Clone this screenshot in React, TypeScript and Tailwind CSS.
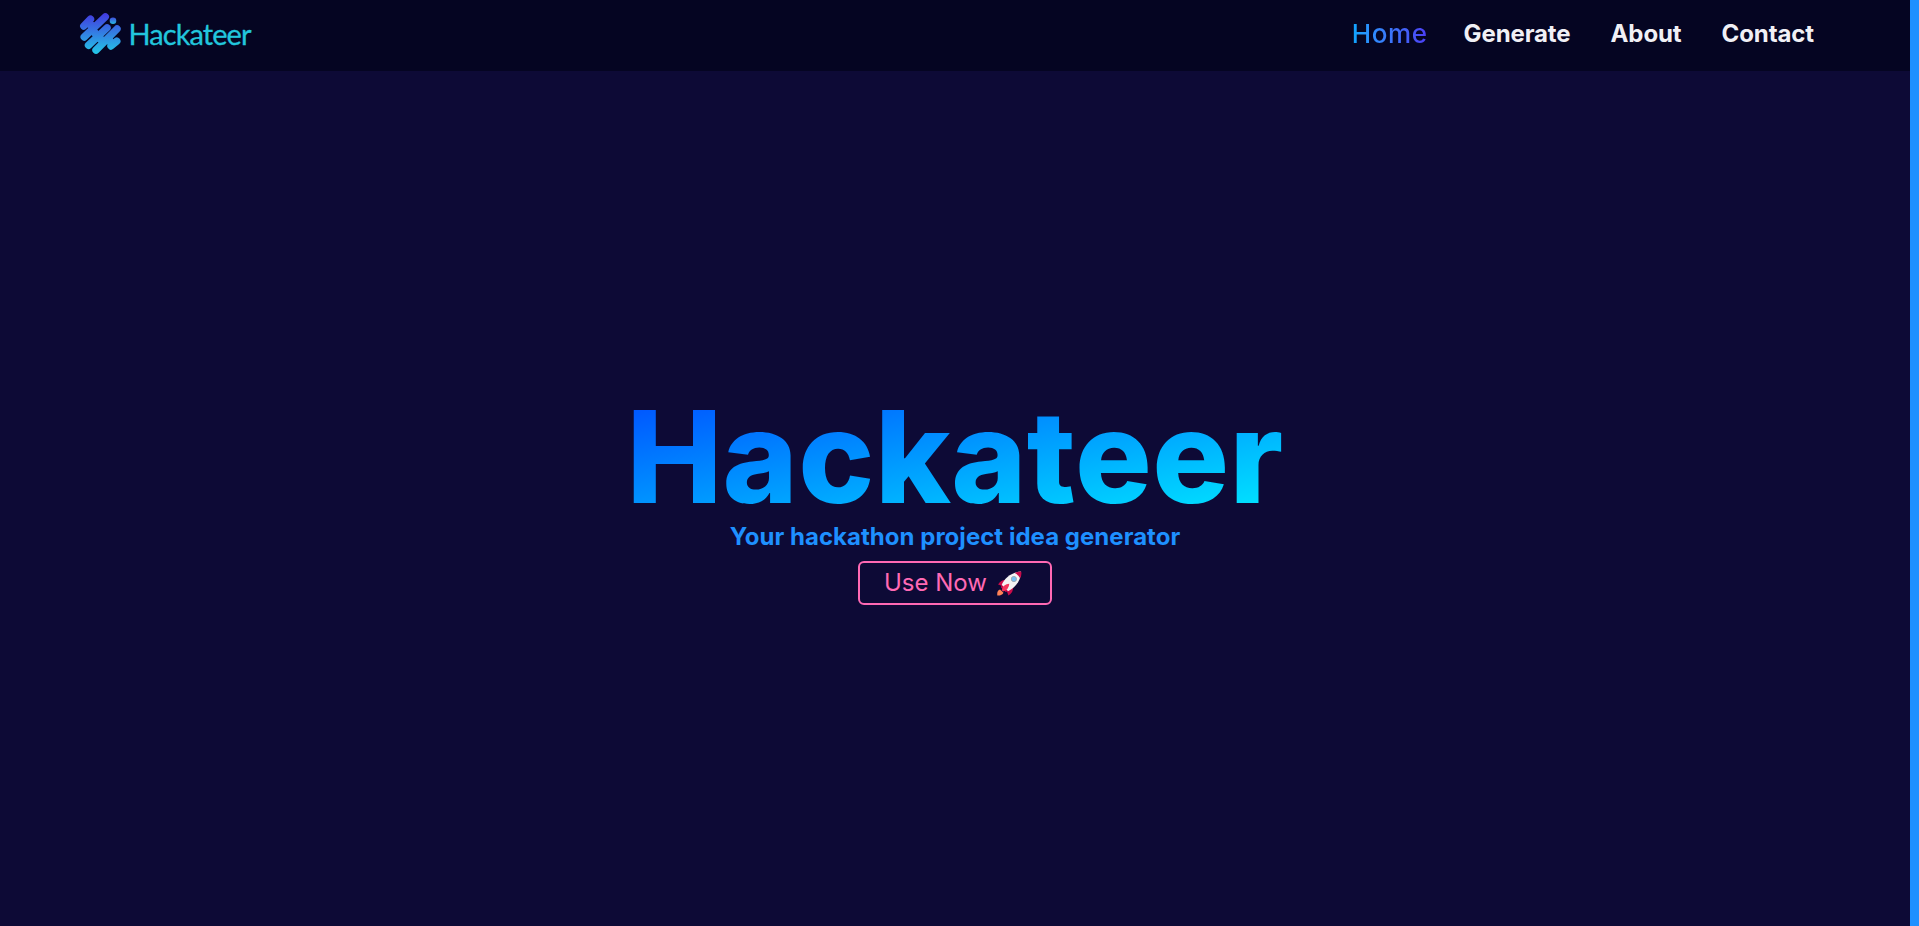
import React from 'react';

interface NavItem {
  label: string;
  href: string;
}

const navItems: NavItem[] = [
  { label: 'Generate', href: '#generate' },
  { label: 'About', href: '#about' },
  { label: 'Contact', href: '#contact' },
];

const Logo: React.FC = () => (
  <svg width="176" height="48" viewBox="0 0 176 48" aria-label="Hackateer">
    <defs>
      <linearGradient id="mark" gradientUnits="userSpaceOnUse" x1="0" y1="4" x2="0" y2="46">
        <stop offset="0" stopColor="#4338e0" />
        <stop offset="1" stopColor="#22cbe6" />
      </linearGradient>
      <linearGradient id="dot" gradientUnits="userSpaceOnUse" x1="0" y1="9" x2="0" y2="15">
        <stop offset="0" stopColor="#3f55de" />
        <stop offset="1" stopColor="#27b9e2" />
      </linearGradient>
    </defs>
    <g stroke="url(#mark)" strokeWidth="7.4" strokeLinecap="round" fill="none">
      <path d="M4.8 17 L11.5 10.2" />
      <path d="M5.2 28 L26.3 7.8" />
      <path d="M9.5 36.3 L28 18.9" />
      <path d="M17 41.2 L38 20" />
      <path d="M32 37 L37.8 32.2" />
      {/* joins between the strokes */}
      <path d="M9 14 L15 18 M14 22 L20 28 M19 28 L25 33 M28 28 L33 35" strokeWidth="8" strokeLinecap="butt" />
    </g>
    <circle cx="34" cy="11.8" r="3.3" fill="url(#dot)" />
    <text x="49.5" y="35.5" textLength="123" fill="#22c6dd" stroke="#22c6dd" strokeWidth="0.3" className="font-['Lato',sans-serif] text-[29px]">Hackateer</text>
  </svg>
);

const Rocket: React.FC = () => (
  <svg width="25" height="25" viewBox="0 0 24 24" aria-hidden="true">
    <path d="M1 13 Q4 8 9.5 8.5 L7 15 Z" fill="#ca0b4a" />
    <path d="M15.5 15 Q16 20 11 23.5 L8.5 17 Z" fill="#ca0b4a" />
    <path d="M4.5 13.5 C7 7 13 1.5 23 .5 C23.5 8 18 16 10.5 19.5 Z" fill="#f4f4f4" />
    <path d="M17 1.9 Q20 .5 23.2 .4 Q24 3.5 22.2 7 Q20.5 3.5 17 1.9 Z" fill="#ca0b4a" />
    <path d="M4.5 13.5 L10.5 19.5 L8.2 20.2 L3.7 15.6 Z" fill="#ca0b4a" />
    <path d="M4.5 18.5 Q6 12.5 11.8 12.3 Q11.5 18 5.8 19.6 Z" fill="#f3355c" />
    <path d="M.3 23.6 Q-.3 18.5 3 17.8 L6.2 20.9 Q5 23.8 .3 23.6 Z" fill="#ff8257" />
    <circle cx="16.2" cy="7.7" r="2.5" fill="#74c0f5" stroke="#9ba6ae" strokeWidth=".9" />
  </svg>
);

const App: React.FC = () => {
  return (
    <div className="flex h-screen w-full overflow-hidden bg-[#0d0a36] font-['Inter',sans-serif]">
      <div className="flex flex-1 flex-col">
        <header className="flex h-[71px] items-center justify-between bg-[#050522] pr-[96px] pl-[79px]">
          <a href="#" className="-mt-[5px]">
            <Logo />
          </a>
          <nav className="-mt-1 flex items-center text-2xl">
            <a href="#" className="mt-0.5 mr-[36px] bg-linear-to-r from-[#0aa5ff] to-[#4b3bf5] bg-clip-text text-[26px] font-medium tracking-[0.6px] text-transparent">
              Home
            </a>
            <div className="flex gap-[40px] font-bold tracking-[-0.1px] text-[#f0f0f5]">
              {navItems.map(item => (
                <a key={item.label} href={item.href}>{item.label}</a>
              ))}
            </div>
          </nav>
        </header>

        <main className="flex flex-1 flex-col items-center pt-[320px]">
          <h1 className="bg-[linear-gradient(to_bottom_right,#004cff,#00eeff)] bg-clip-text text-[128px] leading-[131px] font-extrabold tracking-[0.4px] text-transparent">
            Hackateer
          </h1>
          <h2 className="text-2xl leading-[29px] font-bold tracking-[0.03px] text-[#1e90ff]">Your hackathon project idea generator</h2>
          <button className="mt-[10px] flex h-[44px] w-[194px] items-center gap-[10px] rounded-md border-2 border-[#ff69b4] pl-6 text-2xl text-[#ff69b4]">
            <span>Use Now</span>
            <Rocket />
          </button>
        </main>
      </div>
      <div className="w-[9px] bg-[#1e90ff]" />
    </div>
  );
};

export default App;
